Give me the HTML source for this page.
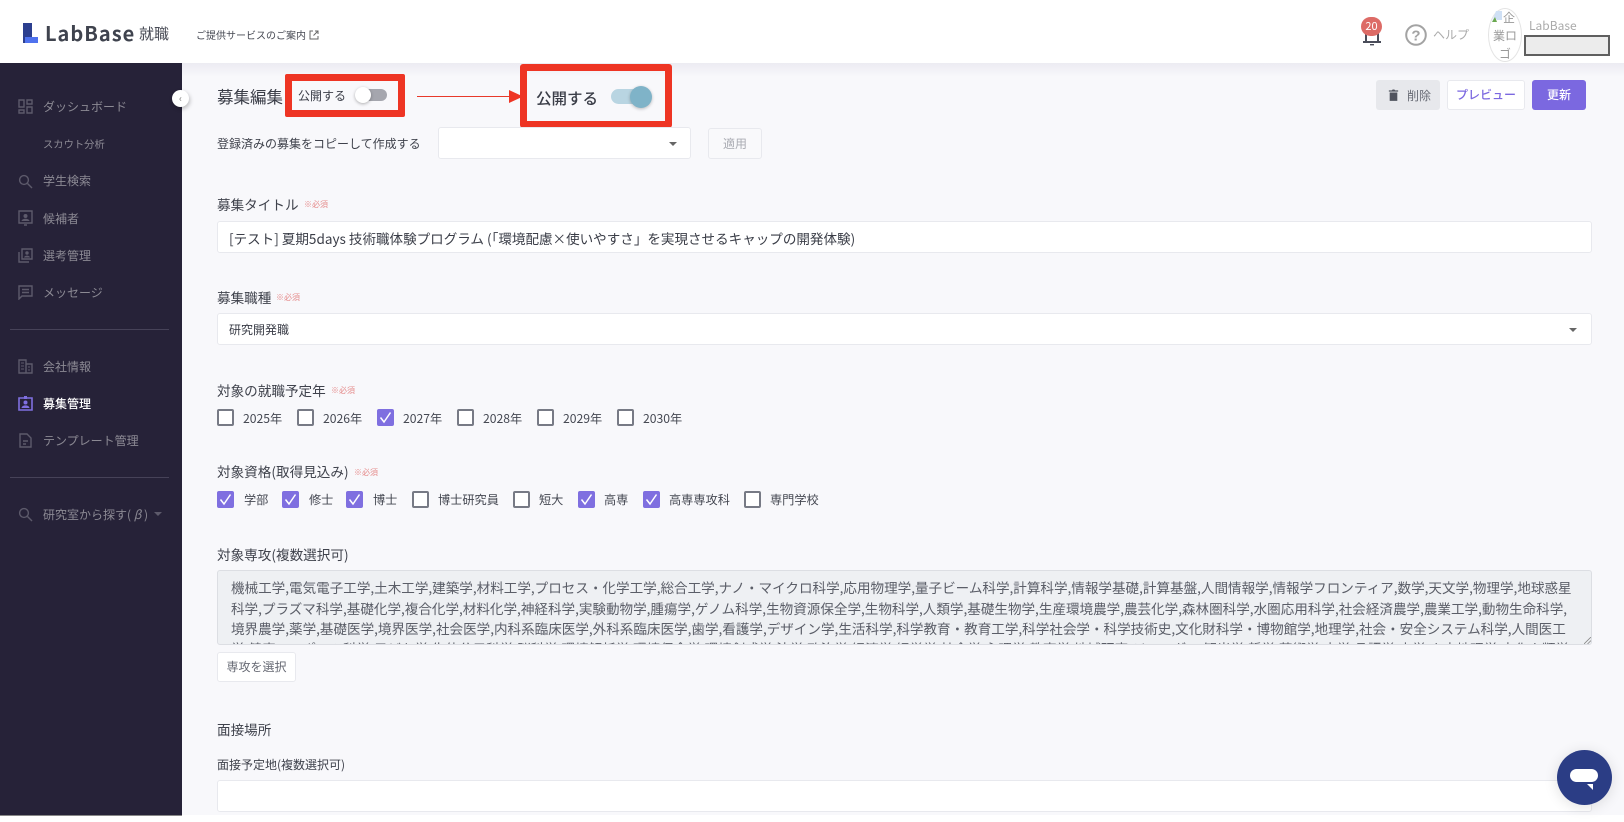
<!DOCTYPE html>
<html lang="ja"><head><meta charset="utf-8"><title>募集編集</title>
<style>
html,body{margin:0;padding:0;background:#fff}
#p{position:relative;width:1624px;height:822px;overflow:hidden;background:#fff;font-family:"Noto Sans CJK JP","Liberation Sans",sans-serif;color:#3a3d47}
#p div,#p span.a,#p svg{position:absolute}
.t{white-space:nowrap;line-height:20px;height:20px;transform:translateY(-10px)}
.n{color:#8c8a94;font-size:12px;left:43px}
.l{font-size:13.6px;left:217px;color:#3f424c}
.r{font-size:8px;color:#e58b8b}
.box{background:#fff;border:1px solid #e8e9ee;border-radius:3px;box-sizing:border-box}
.c{width:17px;height:17px;box-sizing:border-box;border:2px solid #777a85;border-radius:2px;background:#fff}
.c.on{background:#7f6fe0;border-color:#7f6fe0}
.c.on svg{left:0;top:0}
.x{font-size:12.2px;color:#454852}
.ta{font-size:13.57px;color:#5b5e68;left:231px;letter-spacing:0}
.ic{fill:none;stroke:#5d5a6b;stroke-width:1.4}
</style></head><body><div id="p">

<!-- page bg -->
<div style="left:182px;top:63px;width:1442px;height:752px;background:#f8f8fb"></div>
<div style="left:182px;top:63px;width:1442px;height:14px;background:linear-gradient(#ecebf2,#f8f8fb)"></div>

<!-- header -->
<div style="left:23px;top:23px;width:9px;height:20px;background:#2c3f8f"></div>
<div style="left:25px;top:37px;width:13px;height:6px;background:#4f72ee"></div>
<div class="t" style="left:45px;top:33px;font-size:20px;font-weight:700;letter-spacing:1px;color:#3f434e">LabBase</div>
<div class="t" style="left:139px;top:34px;font-size:15px;color:#4a4d57">就職</div>
<div class="t" style="left:196px;top:35px;font-size:10px;color:#454852">ご提供サービスのご案内</div>
<svg style="left:309px;top:30px" width="10" height="10" viewBox="0 0 10 10"><path d="M4 1H1v8h8V6M6 1h3v3M9 1L4.500 5.500" fill="none" stroke="#666" stroke-width="1"/></svg>

<svg style="left:1361px;top:24px" width="22" height="22" viewBox="0 0 22 22"><path d="M5 18V10a6 6 0 0 1 12 0v8M2 18h18" fill="none" stroke="#4a4d5a" stroke-width="2"/><path d="M9 20h4v1.400H9z" fill="#4a4d5a"/></svg>
<div style="left:1361px;top:17px;width:21px;height:19px;border-radius:10px;background:#dd6b66;color:#fff;font-size:11px;line-height:19px;text-align:center">20</div>
<svg style="left:1405px;top:24px" width="22" height="22" viewBox="0 0 22 22"><circle cx="11" cy="11" r="9.800" fill="none" stroke="#a3a3a3" stroke-width="2"/><text x="11" y="16.500" font-size="15" font-weight="700" text-anchor="middle" fill="#a3a3a3" font-family="Liberation Sans">?</text></svg>
<div class="t" style="left:1433px;top:35px;font-size:12px;color:#aaa">ヘルプ</div>
<div style="left:1488px;top:8px;width:34px;height:54px;box-sizing:border-box;border:1px solid #e4e4e4;border-radius:50%;font-size:12px;line-height:18px;color:#999;text-align:center;overflow:hidden">&nbsp;&nbsp;&nbsp;企<br>業ロ<br>ゴ</div>
<svg style="left:1491px;top:10px" width="12" height="13" viewBox="0 0 12 13"><path d="M1 12L4 8l2 2h5V1H5z" fill="#cfe0f5"/><path d="M1 12l3-5 2 5z" fill="#6aa84f"/></svg>
<div class="t" style="left:1529px;top:26px;font-size:12px;color:#aaa">LabBase</div>
<div style="top:35px;height:21px;left:1524px;width:86px;box-sizing:border-box;border:2px solid #5f5f5f;background:#ececec"></div>

<!-- sidebar -->
<div style="left:0;top:63px;width:182px;height:752px;background:#262238"></div>
<svg style="left:18px;top:99px" width="15" height="15" viewBox="0 0 15 15"><path class="ic" d="M1 1h5v7H1zM9 1h5v4H9zM9 8h5v6H9zM1 11h5v3H1z"/></svg>
<div class="t n" style="top:107px">ダッシュボード</div>
<div class="t n" style="top:144px;font-size:10.3px">スカウト分析</div>
<svg style="left:18px;top:174px" width="15" height="15" viewBox="0 0 15 15"><circle class="ic" cx="6" cy="6" r="4.400"/><path class="ic" d="M9.500 9.500L14 14"/></svg>
<div class="t n" style="top:181px">学生検索</div>
<svg style="left:18px;top:210px" width="15" height="16" viewBox="0 0 15 16"><path class="ic" d="M1 1h13v12H1zM6 15h3"/><circle cx="7.500" cy="6" r="2" fill="#5d5a6b"/><path d="M3.500 11c.5-3 7.500-3 8 0z" fill="#5d5a6b"/></svg>
<div class="t n" style="top:219px">候補者</div>
<svg style="left:18px;top:248px" width="15" height="15" viewBox="0 0 15 15"><path class="ic" d="M4 1h10v10H4zM1 4v10h10"/><circle cx="9" cy="5" r="1.700" fill="#5d5a6b"/><path d="M6 9.500c.5-2.500 5.500-2.500 6 0z" fill="#5d5a6b"/></svg>
<div class="t n" style="top:256px">選考管理</div>
<svg style="left:18px;top:285px" width="15" height="15" viewBox="0 0 15 15"><path class="ic" d="M1 1h13v10H4l-3 3zM4 4.500h7M4 7.500h7"/></svg>
<div class="t n" style="top:293px">メッセージ</div>
<div style="left:10px;top:329px;width:159px;height:1px;background:#464258"></div>
<svg style="left:18px;top:359px" width="15" height="15" viewBox="0 0 15 15"><path class="ic" d="M1 1h7v13H1zM8 5h6v9H8z"/><path d="M3 4h3M3 7h3M3 10h3M10 8h2M10 11h2" stroke="#5d5a6b" fill="none"/></svg>
<div class="t n" style="top:367px">会社情報</div>
<svg style="left:18px;top:395px" width="15" height="16" viewBox="0 0 15 16"><path d="M1 3h13v12H1z" fill="none" stroke="#7f6fe0" stroke-width="1.600"/><path d="M6 1h3v3H6z" fill="#7f6fe0"/><circle cx="7.500" cy="7.500" r="2" fill="#7f6fe0"/><path d="M3.500 13c.5-3.500 7.500-3.500 8 0z" fill="#7f6fe0"/></svg>
<div class="t n" style="top:404px;color:#fff;font-weight:500">募集管理</div>
<svg style="left:19px;top:433px" width="13" height="15" viewBox="0 0 13 15"><path class="ic" d="M1 1h7l4 4v9H1zM4 8h5M4 11h3"/></svg>
<div class="t n" style="top:441px">テンプレート管理</div>
<div style="left:10px;top:477px;width:159px;height:1px;background:#464258"></div>
<svg style="left:18px;top:507px" width="15" height="15" viewBox="0 0 15 15"><circle class="ic" cx="6" cy="6" r="4.400"/><path class="ic" d="M9.500 9.500L14 14"/></svg>
<div class="t n" style="top:515px">研究室から探す( <i>β</i> )</div>
<div style="left:154px;top:512px;width:0;height:0;border:4px solid transparent;border-top:4px solid #5d5a6b"></div>
<div style="left:172px;top:90px;width:17px;height:17px;border-radius:50%;background:#fff;box-shadow:1px 2px 4px rgba(0,0,0,.25);color:#777;font-size:10px;line-height:16px;text-align:center">‹</div>

<!-- title row -->
<div class="t" style="left:217px;top:96px;font-size:16.5px;color:#3a3d47">募集編集</div>
<div style="left:285px;top:74px;width:120px;height:43px;box-sizing:border-box;border:7px solid #ee3524;border-radius:2px"></div>
<div class="t" style="left:298px;top:96px;font-size:12px;color:#3a3d47">公開する</div>
<div style="top:89px;height:12px;border-radius:6px;background:#a5a6ae;left:358px;width:29px"></div>
<div style="left:355px;top:87px;width:16px;height:16px;border-radius:50%;background:#fff;box-shadow:0 1px 3px rgba(0,0,0,.3)"></div>

<div style="left:417px;top:95.500px;width:94px;height:1.500px;background:#e8392a"></div>
<svg style="left:509px;top:90px" width="14" height="13" viewBox="0 0 14 13"><path d="M0 0l14 6.500L0 13z" fill="#ee3524"/></svg>
<div style="top:64px;height:64px;box-sizing:border-box;border:7px solid #ee3524;border-radius:3px;left:520px;width:152px"></div>
<div class="t" style="left:536px;top:98px;font-size:15.500px;font-weight:500;color:#3a3d47">公開する</div>
<div style="left:611px;top:89px;width:36px;height:15px;border-radius:8px;background:#b9d5e2"></div>
<div style="left:630px;top:86px;width:22px;height:22px;border-radius:50%;background:#7fb3c8;box-shadow:0 1px 3px rgba(0,0,0,.25)"></div>

<div style="top:80px;height:30px;left:1376px;width:64px;background:#e7e8ec;border-radius:3px"></div>
<svg style="left:1388px;top:88px" width="11" height="14" viewBox="0 0 13 14"><path d="M2 4h9v10H2zM1 1.500h3.500l1-1h2l1 1H12V3H1z" fill="#50535e"/></svg>
<div class="t" style="left:1407px;top:96px;font-size:12px;color:#666973">削除</div>
<div class="box" style="left:1447px;top:80px;width:78px;height:30px;color:#7b68e0;font-size:12px;line-height:28px;text-align:center;font-weight:500">プレビュー</div>
<div style="left:1532px;top:80px;width:54px;height:30px;background:#7b68e0;border-radius:3px;color:#fff;font-size:12px;line-height:30px;text-align:center;font-weight:500">更新</div>

<!-- copy -->
<div class="t" style="left:217px;top:144px;font-size:12px;color:#3f424c">登録済みの募集をコピーして作成する</div>
<div class="box" style="left:438px;top:127px;width:253px;height:32px"></div>
<div style="left:669px;top:142px;width:0;height:0;border:4px solid transparent;border-top:4px solid #666"></div>
<div class="box" style="left:708px;top:128px;width:54px;height:31px;background:#f9f9fb;color:#aaacb3;font-size:12px;line-height:29px;text-align:center">適用</div>

<!-- title -->
<div class="t l" style="top:204px">募集タイトル</div><div class="t r" style="left:304px;top:205px">※必須</div>
<div class="box" style="left:217px;top:221px;width:1375px;height:32px"></div>
<div class="t" style="left:229px;top:238px;font-size:13.55px;color:#3a3d47">[テスト] 夏期5days 技術職体験プログラム (｢環境配慮×使いやすさ」を実現させるキャップの開発体験)</div>

<div class="t l" style="top:297px">募集職種</div><div class="t r" style="left:276px;top:298px">※必須</div>
<div class="box" style="left:217px;top:313px;width:1375px;height:32px"></div>
<div class="t" style="left:229px;top:330px;font-size:12px;color:#3a3d47">研究開発職</div>
<div style="left:1569px;top:328px;width:0;height:0;border:4px solid transparent;border-top:4px solid #666"></div>

<!-- years -->
<div class="t l" style="top:390px">対象の就職予定年</div><div class="t r" style="left:331px;top:391px">※必須</div>
<div class="c" style="left:217px;top:409px"></div><div class="t x" style="left:243px;top:418px">2025年</div>
<div class="c" style="left:297px;top:409px"></div><div class="t x" style="left:323px;top:418px">2026年</div>
<div class="c on" style="left:377px;top:409px"><svg width="13" height="13" viewBox="0 0 13 13"><path d="M1.500 6.500l3.500 4.500 6.500-9.500" fill="none" stroke="#fff" stroke-width="1.500"/></svg></div><div class="t x" style="left:403px;top:418px">2027年</div>
<div class="c" style="left:457px;top:409px"></div><div class="t x" style="left:483px;top:418px">2028年</div>
<div class="c" style="left:537px;top:409px"></div><div class="t x" style="left:563px;top:418px">2029年</div>
<div class="c" style="left:617px;top:409px"></div><div class="t x" style="left:643px;top:418px">2030年</div>

<!-- qualifications -->
<div class="t l" style="top:471px">対象資格(取得見込み)</div><div class="t r" style="left:354px;top:473px">※必須</div>
<div class="c on" style="left:217px;top:491px"><svg width="13" height="13" viewBox="0 0 13 13"><path d="M1.500 6.500l3.500 4.500 6.500-9.500" fill="none" stroke="#fff" stroke-width="1.500"/></svg></div><div class="t x" style="left:244px;top:499px">学部</div>
<div class="c on" style="left:282px;top:491px"><svg width="13" height="13" viewBox="0 0 13 13"><path d="M1.500 6.500l3.500 4.500 6.500-9.500" fill="none" stroke="#fff" stroke-width="1.500"/></svg></div><div class="t x" style="left:309px;top:499px">修士</div>
<div class="c on" style="left:346px;top:491px"><svg width="13" height="13" viewBox="0 0 13 13"><path d="M1.500 6.500l3.500 4.500 6.500-9.500" fill="none" stroke="#fff" stroke-width="1.500"/></svg></div><div class="t x" style="left:373px;top:499px">博士</div>
<div class="c" style="left:412px;top:491px"></div><div class="t x" style="left:438px;top:499px">博士研究員</div>
<div class="c" style="left:513px;top:491px"></div><div class="t x" style="left:539px;top:499px">短大</div>
<div class="c on" style="left:578px;top:491px"><svg width="13" height="13" viewBox="0 0 13 13"><path d="M1.500 6.500l3.500 4.500 6.500-9.500" fill="none" stroke="#fff" stroke-width="1.500"/></svg></div><div class="t x" style="left:604px;top:499px">高専</div>
<div class="c on" style="left:643px;top:491px"><svg width="13" height="13" viewBox="0 0 13 13"><path d="M1.500 6.500l3.500 4.500 6.500-9.500" fill="none" stroke="#fff" stroke-width="1.500"/></svg></div><div class="t x" style="left:669px;top:499px">高専専攻科</div>
<div class="c" style="left:744px;top:491px"></div><div class="t x" style="left:770px;top:499px">専門学校</div>

<!-- majors -->
<div class="t l" style="top:554px">対象専攻(複数選択可)</div>
<div style="left:217px;top:570px;width:1375px;height:75px;box-sizing:border-box;background:#eef0f3;border:1px solid #dcdee3;border-radius:3px;overflow:hidden">
<div class="t ta" style="left:13px;top:16px">機械工学,電気電子工学,土木工学,建築学,材料工学,プロセス・化学工学,総合工学,ナノ・マイクロ科学,応用物理学,量子ビーム科学,計算科学,情報学基礎,計算基盤,人間情報学,情報学フロンティア,数学,天文学,物理学,地球惑星</div>
<div class="t ta" style="left:13px;top:37px">科学,プラズマ科学,基礎化学,複合化学,材料化学,神経科学,実験動物学,腫瘍学,ゲノム科学,生物資源保全学,生物科学,人類学,基礎生物学,生産環境農学,農芸化学,森林圏科学,水圏応用科学,社会経済農学,農業工学,動物生命科学,</div>
<div class="t ta" style="left:13px;top:57px">境界農学,薬学,基礎医学,境界医学,社会医学,内科系臨床医学,外科系臨床医学,歯学,看護学,デザイン学,生活科学,科学教育・教育工学,科学社会学・科学技術史,文化財科学・博物館学,地理学,社会・安全システム科学,人間医工</div>
<div class="t ta" style="left:13px;top:77px">学,健康・スポーツ科学,子ども学,生体分子科学,脳科学,環境解析学,環境保全学,環境創成学,法学,政治学,経済学,経営学,社会学,心理学,教育学,地域研究,ジェンダー,観光学,哲学,芸術学,文学,言語学,史学,人文地理学,文化人類学</div>
</div>
<svg style="left:1584px;top:637px" width="7" height="7" viewBox="0 0 7 7"><path d="M0 7L7 0M3.500 7L7 3.500" stroke="#888" stroke-width=".8" fill="none"/></svg>
<div class="box" style="left:217px;top:652px;width:79px;height:30px;color:#666973;font-size:12px;line-height:28px;text-align:center">専攻を選択</div>

<!-- interview -->
<div class="t l" style="top:729px">面接場所</div>
<div class="t" style="left:217px;top:765px;font-size:12px;color:#3f424c">面接予定地(複数選択可)</div>
<div class="box" style="left:217px;top:780px;width:1375px;height:32px"></div>
<div style="left:0;top:815px;width:1624px;height:7px;background:#fff"></div>
<div style="left:0;top:815px;width:182px;height:1px;background:#888"></div>

<!-- chat -->
<div style="left:1557px;top:750px;width:55px;height:55px;border-radius:50%;background:#2b3d85;box-shadow:0 2px 14px rgba(0,0,0,.12)"></div>
<div style="left:1570px;top:769px;width:28px;height:13px;border-radius:7px;background:#fff"></div>
<svg style="left:1587px;top:784px" width="7" height="7" viewBox="0 0 7 7"><path d="M0 0h6v6z" fill="#fff"/></svg>
</div></body></html>
